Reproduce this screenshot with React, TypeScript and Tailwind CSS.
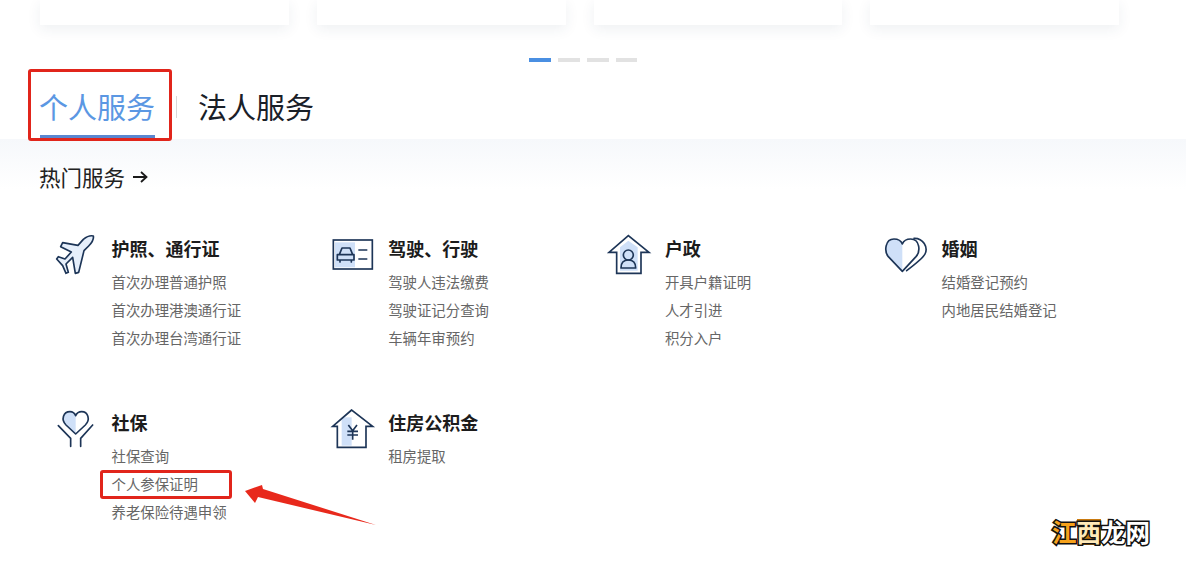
import React from "react";

const D = "#1d3557";
const L = "#cfe0f8";

function Icon({ w = 190, className = "", children }: { w?: number; className?: string; children: React.ReactNode }) {
  return (
    <svg
      className={"shrink-0 " + className}
      width={w / 3}
      height={60}
      viewBox={`0 0 ${w} 180`}
      fill="none"
      stroke={D}
      strokeWidth="5"
      strokeLinejoin="round"
      strokeLinecap="round"
    >
      {children}
    </svg>
  );
}

function Plane() {
  return (
    <Icon className="-mt-[10px]">
      <path
        d="M160 36 C162 46 156 56 146 66 L132 80 L116 145 L106 148 L98 100 L78 120 L85 145 L78 148 L68 125 L50 105 L55 98 L75 105 L94 84 L62 68 L68 56 L114 64 L130 46 C140 38 152 34 160 36 Z"
        fill="#e6effb"
      />
    </Icon>
  );
}

function Car() {
  return (
    <Icon className="-mt-[10px] ml-[3px]">
      <rect x="45" y="55" width="60" height="75" fill={L} stroke="none" />
      <rect x="40" y="48" width="117" height="87" strokeLinejoin="miter" />
      <path d="M58 92 L66 72 H90 L98 92 M52 92 H102 V108 H52 Z M60 108 V114 M94 108 V114" />
      <path d="M115 78 H142 M115 105 H142" strokeLinecap="butt" />
    </Icon>
  );
}

function HomePerson() {
  return (
    <Icon className="-mt-[10px] ml-[2px]">
      <path d="M75 70 L100 50 L128 70 V140 H75 Z" fill={L} stroke="none" />
      <path d="M100 35 L42 85 H65 V148 H138 V85 H162 Z" strokeLinejoin="miter" />
      <circle cx="100" cy="93" r="15" />
      <path d="M78 132 C78 114 88 108 100 108 C112 108 122 114 122 132 Z" />
    </Icon>
  );
}

function Hearts() {
  return (
    <Icon className="-mt-[10px]">
      <path d="M97 142 L55 98 C42 82 45 45 72 45 C85 45 93 50 97 60 Z" fill={L} stroke="none" />
      <path d="M97 142 L55 98 C42 82 45 45 72 45 C85 45 93 50 97 60 C101 50 110 45 122 45 C150 45 152 82 138 98 Z" />
      <path d="M132 43 C160 42 175 70 165 90 C158 104 130 125 110 140" />
    </Icon>
  );
}

function HeartHands() {
  return (
    <Icon className="-mt-[9px]">
      <path d="M107 105 L78 78 C62 62 70 38 90 38 C98 38 104 43 107 50 Z" fill={L} stroke="none" />
      <path d="M107 105 L78 78 C62 62 70 38 90 38 C98 38 104 43 107 50 C110 43 116 38 125 38 C144 38 152 62 136 78 Z" />
      <path d="M55 80 L92 118 V142 M158 78 L122 118 V142" strokeLinejoin="miter" />
    </Icon>
  );
}

function HomeYuan() {
  return (
    <Icon className="-mt-[9px] ml-[3px]">
      <rect x="65" y="55" width="30" height="85" fill={L} stroke="none" />
      <path d="M95 33 L38 82 H52 V145 H138 V82 H158 Z" strokeLinejoin="miter" />
      <path d="M85 78 L98 95 L111 78 M82 97 H114 M82 108 H114 M98 95 V122" strokeLinecap="butt" />
    </Icon>
  );
}

type Service = { title: string; icon: React.ReactNode; links: string[] };

const services: Service[] = [
  { title: "护照、通行证", icon: <Plane />, links: ["首次办理普通护照", "首次办理港澳通行证", "首次办理台湾通行证"] },
  { title: "驾驶、行驶", icon: <Car />, links: ["驾驶人违法缴费", "驾驶证记分查询", "车辆年审预约"] },
  { title: "户政", icon: <HomePerson />, links: ["开具户籍证明", "人才引进", "积分入户"] },
  { title: "婚姻", icon: <Hearts />, links: ["结婚登记预约", "内地居民结婚登记"] },
  { title: "社保", icon: <HeartHands />, links: ["社保查询", "个人参保证明", "养老保险待遇申领"] },
  { title: "住房公积金", icon: <HomeYuan />, links: ["租房提取"] },
];

export default function App() {
  return (
    <div className="relative h-[563px] w-[1186px] overflow-hidden bg-white font-['Noto_Sans_CJK_SC','Liberation_Sans',sans-serif]">
      <div className="flex gap-7 pl-10 pr-[67px]">
        {[0, 1, 2, 3].map((i) => (
          <div key={i} className="h-[25px] flex-1 bg-white shadow-[0_4px_14px_rgba(40,60,90,0.08)]" />
        ))}
      </div>

      <div className="mt-[33px] flex gap-[7px] pl-[529px]">
        <div className="h-1 w-[22px] bg-[#4a8fe2]" />
        <div className="h-1 w-[22px] bg-[#e2e2e2]" />
        <div className="h-1 w-[21.500px] bg-[#e2e2e2]" />
        <div className="h-1 w-[21.500px] bg-[#e2e2e2]" />
      </div>

      <div className="flex h-[77px] items-start pl-10">
        <div className="flex h-[76px] w-[115px] flex-col">
          <div className="-ml-px pt-[23px] text-[29px] leading-[42px] text-[#5b97e3]">个人服务</div>
          <div className="mt-[8px] h-[3px] w-[115px] bg-[#5a86d0]" />
        </div>
        <div className="mt-[34px] ml-[21px] h-[22px] w-px bg-[#d8d8d8]" />
        <div className="ml-[21px] pt-[23px] text-[29px] leading-[42px] text-[#1a2028]">法人服务</div>
      </div>

      <div className="bg-gradient-to-b from-[#f6f8fb] to-white to-[50px] px-10 pt-[24px]">
        <div className="-ml-px flex items-center gap-[8px] text-[21.5px] leading-[28px] text-[#222222]">
          <span>热门服务</span>
          <svg width="15" height="14" viewBox="0 0 15 14" fill="none" stroke="#1a1a1a" strokeWidth="1.8">
            <path d="M0 7H13M8 2l5.500 5-5.500 5" />
          </svg>
        </div>

        <div className="mt-[43px] grid grid-cols-[repeat(4,276.700px)] grid-rows-[174px_auto]">
          {services.map((s) => (
            <div key={s.title} className="flex">
              <div className="flex h-[28px] w-[71.500px] items-start">{s.icon}</div>
              <div>
                <div className="mb-[6px] text-[18px] font-bold leading-[28px] text-[#1c1c1c]">{s.title}</div>
                {s.links.map((l) => (
                  <div key={l} className="text-[14.400px] leading-[28px] text-[#666666]">{l}</div>
                ))}
              </div>
            </div>
          ))}
        </div>
      </div>

      <div className="absolute left-7 top-[69px] h-[72px] w-[144px] rounded-[3px] border-[3px] border-[#e1251b]" />
      <div className="absolute left-[100px] top-[470px] h-[29px] w-[132px] rounded-[3px] border-[3px] border-[#e1251b]" />
      <svg className="absolute left-[240px] top-[480px]" width="140" height="50" viewBox="240 480 140 50">
        <polygon points="245,491 262,485 263,489 376,525 258,497 255,503" fill="#e8291c" />
      </svg>

      <div className="absolute left-[1052px] top-[516px] flex h-[32px] items-center text-[24.500px] font-bold leading-[26px] [paint-order:stroke_fill] [-webkit-text-stroke:3px_#111111]">
        <span className="text-[#f6a11b]">江</span>
        <span className="bg-[#c97a10] text-[#ffe9b8]">西</span>
        <span className="text-white">龙</span>
        <span className="text-white">网</span>
      </div>
    </div>
  );
}
